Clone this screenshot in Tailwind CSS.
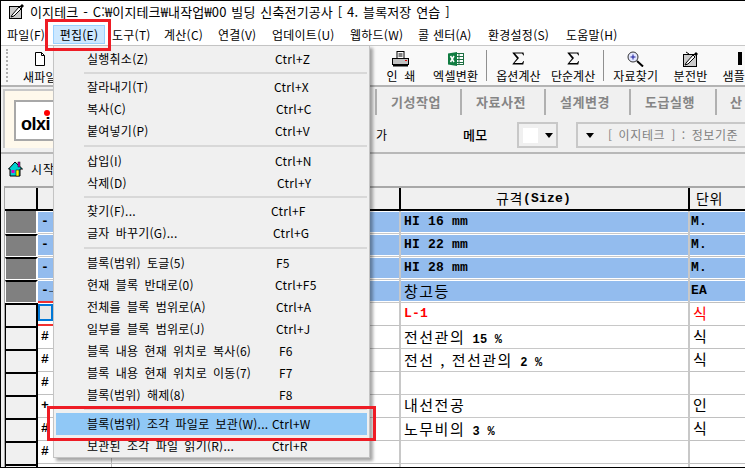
<!DOCTYPE html>
<html lang="ko">
<head>
<meta charset="UTF-8">
<title>이지테크</title>
<script src="https://cdn.jsdelivr.net/npm/@tailwindcss/browser@4"></script>
</head>
<body class="bg-white">
<div class="relative w-[745px] h-[468px] overflow-hidden border border-black border-r-0 bg-[#f0f0f0] text-[12px] tracking-[0.25px] text-black font-['Noto_Sans_CJK_KR','Liberation_Sans',sans-serif]">

  <!-- title bar -->
  <div class="h-[21px] bg-white flex items-center pl-[8px] gap-[5px]">
    <svg width="16" height="17" viewBox="0 0 16 17" class="shrink-0"><rect x=".5" y="3.500" width="12" height="12" fill="#ccc" stroke="#000"/><path d="M3 12l7-8 2 2-7 7-3 1z" fill="#fff" stroke="#000"/><path d="M11 3l2-2 2 2-2 2z" fill="#000"/></svg>
    <span class="text-[13px] leading-none tracking-[0.15px] [word-spacing:1px] whitespace-nowrap">이지테크 - C:₩이지테크₩내작업₩00 빌딩 신축전기공사 [ 4. 블록저장 연습 ]</span>
  </div>

  <!-- menu bar -->
  <div class="h-[24px] bg-white flex items-center pl-[6px] pt-[2px] border-b border-[#c8c8c8] whitespace-nowrap">
    <span class="w-[46px]">파일(F)</span>
    <span class="w-[52px] h-[19px] flex items-center justify-center bg-[#cce8ff] border border-[#99d1ff]">편집(E)</span>
    <span class="w-[59px] pl-[7px]">도구(T)</span>
    <span class="w-[54px]">계산(C)</span>
    <span class="w-[54px]">연결(V)</span>
    <span class="w-[78px]">업데이트(U)</span>
    <span class="w-[68px]">웹하드(W)</span>
    <span class="w-[70px]">콜 센터(A)</span>
    <span class="w-[78px]">환경설정(S)</span>
    <span>도움말(H)</span>
  </div>

  <!-- toolbar -->
  <div class="h-[41px] bg-[#f9f9f9] flex items-stretch pl-[5px] border-b-2 border-[#b4b4b4] whitespace-nowrap">
    <div class="w-[2px] my-[3px] border-l-2 border-dotted border-[#b0b0b0]"></div>
    <div class="w-[64px] flex flex-col items-center pt-[6px]">
      <svg width="12" height="14" viewBox="0 0 12 14"><path d="M1.500.5h6l3 3v10h-9z" fill="#fff" stroke="#000"/><path d="M7.500.5v3h3" fill="none" stroke="#000"/></svg>
      <span class="mt-[3px] leading-[16px]">새파일</span>
    </div>
    <div class="w-[306px]"></div>
    <div class="w-[50px] flex flex-col items-center pt-[5px]">
      <svg width="17" height="16" viewBox="0 0 17 16"><rect x="5" y=".5" width="7" height="7" fill="#fff" stroke="#000"/><path d="M6.500 3h4M6.500 5h4" stroke="#000"/><rect x=".5" y="7.500" width="16" height="6" fill="#c0c0c0" stroke="#000"/><rect x="13" y="9" width="2" height="1" fill="#d00"/><path d="M1 14.500h15" stroke="#000" stroke-width="2"/></svg>
      <span class="leading-[18px] [word-spacing:3px]">인 쇄</span>
    </div>
    <div class="w-[60px] flex flex-col items-center pt-[6px]">
      <svg width="16" height="14" viewBox="0 0 16 14"><rect x="6.500" y="1.500" width="9" height="11" fill="#fff" stroke="#1d6f42"/><path d="M7 4.500h8M7 7.500h8M7 10.500h8M11 2v10" stroke="#1d6f42"/><path d="M0 1.500L9 0v14L0 12.500z" fill="#107c41"/><path d="M2.500 4l3.500 6M6 4l-3.500 6" stroke="#fff" stroke-width="1.500"/></svg>
      <span class="mt-[1px] leading-[18px]">엑셀변환</span>
    </div>
    <div class="w-px my-[4px] bg-[#909090]"></div>
    <div class="w-[64px] flex flex-col items-center pt-[6px]">
      <svg width="13" height="13" viewBox="0 0 13 13"><path d="M.5.5h11l.5 3h-.5L10 1.500H3L7 6 2.500 11H10l1.500-2h.5l-.7 3.500H.5v-.5L5 6.500.5 1z" fill="#000"/></svg>
      <span class="mt-[2px] leading-[18px] tracking-[0px]">옵션계산</span>
    </div>
    <div class="w-[46px] flex flex-col items-center pt-[6px]">
      <svg width="13" height="13" viewBox="0 0 13 13"><path d="M.5.5h11l.5 3h-.5L10 1.500H3L7 6 2.500 11H10l1.500-2h.5l-.7 3.500H.5v-.5L5 6.500.5 1z" fill="#000"/></svg>
      <span class="mt-[2px] leading-[18px] tracking-[0px]">단순계산</span>
    </div>
    <div class="w-px ml-[7px] my-[4px] bg-[#909090]"></div>
    <div class="w-[64px] flex flex-col items-center pt-[5px]">
      <svg width="17" height="16" viewBox="0 0 17 16"><circle cx="6" cy="6" r="5" fill="#e4e8ff" stroke="#333"/><path d="M3.500 6h5M6 3.500v5" stroke="#1a1a9a"/><path d="M10 10l6 5.500" stroke="#000" stroke-width="2"/></svg>
      <span class="leading-[18px]">자료찾기</span>
    </div>
    <div class="w-[46px] flex flex-col items-center pt-[5px]">
      <svg width="16" height="16" viewBox="0 0 16 16"><rect x=".5" y="3.500" width="13" height="12" fill="#ccc" stroke="#000"/><path d="M3 12l7-8 2 2-7 7-3 1z" fill="#fff" stroke="#000"/><path d="M11 3l2-2 2 2-2 2z" fill="#000"/><path d="M3 1l3 2" stroke="#000"/></svg>
      <span class="leading-[18px]">분전반</span>
    </div>
    <div class="pl-[9px] flex flex-col">
      <div class="h-[21px] pt-[6px] pl-[16px]"><div class="w-[4px] h-[13px] bg-black"></div></div>
      <span class="leading-[18px]">샘플</span>
    </div>
  </div>

  <!-- logo and tabs -->
  <div class="h-[67px] pt-[2px] flex border-b-2 border-[#b8b8b8]">
    <div class="ml-[2px] w-[50px] h-[59px] bg-[#fff9ec] border-l-2 border-t-2 border-[#c8c8c8] pt-[9px] pl-[9px]">
      <div class="relative h-[41px] bg-white border-l-2 border-t-2 border-b-2 border-[#a8a8a8] flex items-center pl-[5px] pt-[6px]">
        <span class="font-['Liberation_Sans'] font-bold text-[18px] leading-none tracking-[-0.5px]">olxi</span>
        <span class="absolute right-[3px] top-[8px] w-[6px] h-[6px] rounded-full bg-[#f00]"></span>
      </div>
    </div>
    <div class="ml-[323px] flex-1 flex flex-col whitespace-nowrap">
      <div class="h-[26px] flex text-[13px] font-bold tracking-[0.5px] text-[#858585] leading-[26px] border-l-2 border-[#b0b0b0] ml-[-1px]">
        <span class="w-[85px] pl-[14px] border-r-2 border-[#b0b0b0]">기성작업</span>
        <span class="w-[84px] pl-[14px] border-r-2 border-[#b0b0b0]">자료사전</span>
        <span class="w-[85px] pl-[14px] border-r-2 border-[#b0b0b0]">설계변경</span>
        <span class="w-[86px] pl-[14px] border-r-2 border-[#b0b0b0]">도급실행</span>
        <span class="pl-[13px]">산</span>
      </div>
      <div class="h-[26px] mt-[7px] flex items-center">
        <span class="w-[87px]">가</span>
        <span class="w-[54px] font-medium text-[13px]">메모</span>
        <div class="w-[41px] h-[26px] border-2 border-[#c8c8c8] flex items-center pl-[4px] gap-[7px]">
          <span class="w-[15px] h-[15px] bg-white"></span>
          <span class="w-0 h-0 border-x-[4px] border-x-transparent border-t-[5px] border-t-black"></span>
        </div>
        <div class="ml-[18px] flex-1 h-[26px] border-2 border-[#c8c8c8] border-r-0 flex items-center pl-[8px] text-[#808080] overflow-hidden tracking-[0.6px] [word-spacing:2px]">
          <span class="w-0 h-0 border-x-[4px] border-x-transparent border-t-[5px] border-t-black mr-[14px] shrink-0"></span>
          [ 이지테크 ] : 정보기준
        </div>
      </div>
    </div>
  </div>

  <!-- start row -->
  <div class="h-[32px] flex items-center pl-[7px] pb-[3px] gap-[8px]">
    <svg width="15" height="16" viewBox="0 0 15 16"><path d="M7 1L.5 8H2v7h10V8h2.500z" fill="#00d0d0" stroke="#000"/><rect x="10" y="1" width="2" height="5" fill="#e000c0" stroke="#000" stroke-width=".5"/><rect x="3.500" y="9" width="3" height="3" fill="#e000c0"/><rect x="8" y="9" width="3" height="6" fill="#ff0" stroke="#000" stroke-width=".5"/></svg>
    <span class="tracking-[1px]">시작</span>
  </div>

  <!-- grid -->
  <div class="ml-[3px] border-l border-t-2 border-[#a8a8a8] bg-white font-['Liberation_Mono'] font-bold text-[13px] tracking-[0.2px]">
    <div class="h-[23px] flex bg-[#f0f0f0] border-b-2 border-black">
      <div class="w-[33px] border-r-2 border-black"></div>
      <div class="w-[363px] border-r-2 border-black"></div>
      <div class="w-[289px] border-r-2 border-black flex items-center justify-center pr-[22px]"><span class="font-['Noto_Sans_CJK_KR'] font-normal text-[14px] tracking-[0.5px]">규격</span>(Size)</div>
      <div class="flex-1 flex items-center pl-[6px] font-normal font-['Noto_Sans_CJK_KR'] text-[14px] tracking-[0.5px]">단위</div>
    </div>

    <div class="h-[23px] flex">
      <div class="w-[33px] bg-[#808080] border-l border-l-white border-r-2 border-r-white border-b border-b-white"></div>
      <div class="w-[363px] border-r-2 border-[#c8c8c8] border-b border-[#c0c0c0] pt-[1px]"><div class="h-[20px] bg-[#93bcee] pl-[3px] leading-[19px]">-</div></div>
      <div class="w-[289px] border-r-2 border-[#c8c8c8] border-b border-[#c0c0c0] pt-[1px]"><div class="h-[20px] bg-[#93bcee] pl-[3px] leading-[19px] whitespace-pre">HI 16 mm</div></div>
      <div class="flex-1 border-b border-[#c0c0c0] pt-[1px]"><div class="h-[20px] bg-[#93bcee] pl-[1px] leading-[19px]">M.</div></div>
    </div>
    <div class="h-[23px] flex">
      <div class="w-[33px] bg-[#808080] border-t-2 border-t-black border-l border-l-white border-r-2 border-r-white border-b border-b-white"></div>
      <div class="w-[363px] border-r-2 border-[#c8c8c8] border-b border-[#c0c0c0] pt-[1px]"><div class="h-[20px] bg-[#93bcee] pl-[3px] leading-[19px]">-</div></div>
      <div class="w-[289px] border-r-2 border-[#c8c8c8] border-b border-[#c0c0c0] pt-[1px]"><div class="h-[20px] bg-[#93bcee] pl-[3px] leading-[19px] whitespace-pre">HI 22 mm</div></div>
      <div class="flex-1 border-b border-[#c0c0c0] pt-[1px]"><div class="h-[20px] bg-[#93bcee] pl-[1px] leading-[19px]">M.</div></div>
    </div>
    <div class="h-[23px] flex">
      <div class="w-[33px] bg-[#808080] border-t-2 border-t-black border-l border-l-white border-r-2 border-r-white border-b border-b-white"></div>
      <div class="w-[363px] border-r-2 border-[#c8c8c8] border-b border-[#c0c0c0] pt-[1px]"><div class="h-[20px] bg-[#93bcee] pl-[3px] leading-[19px]">-</div></div>
      <div class="w-[289px] border-r-2 border-[#c8c8c8] border-b border-[#c0c0c0] pt-[1px]"><div class="h-[20px] bg-[#93bcee] pl-[3px] leading-[19px] whitespace-pre">HI 28 mm</div></div>
      <div class="flex-1 border-b border-[#c0c0c0] pt-[1px]"><div class="h-[20px] bg-[#93bcee] pl-[1px] leading-[19px]">M.</div></div>
    </div>
    <div class="h-[23px] flex">
      <div class="w-[33px] bg-[#808080] border-t-2 border-t-black border-l border-l-white border-r-2 border-r-white border-b border-b-white"></div>
      <div class="w-[363px] border-r-2 border-[#c8c8c8] border-b border-[#c0c0c0] pt-[1px]"><div class="h-[20px] bg-[#93bcee] pl-[3px] leading-[19px]">-→</div></div>
      <div class="w-[289px] border-r-2 border-[#c8c8c8] border-b border-[#c0c0c0] pt-[1px]"><div class="h-[20px] bg-[#93bcee] pl-[3px] leading-[20px] font-normal font-['Noto_Sans_CJK_KR'] text-[15px] tracking-[1.5px]">창고등</div></div>
      <div class="flex-1 border-b border-[#c0c0c0] pt-[1px]"><div class="h-[20px] bg-[#93bcee] pl-[1px] leading-[19px]">EA</div></div>
    </div>

    <!-- current row -->
    <div class="h-[23px] flex">
      <div class="w-[33px] bg-[#f0f0f0] border-t-2 border-t-black border-l border-l-black border-r-2 border-r-black"></div>
      <div class="w-[74px] h-[25px] -mt-[2px] border-t-2 border-t-[#f03030] border-b-2 border-b-[#f03030] border-r border-r-[#c0c0c0] pt-[1px]"><div class="w-[15px] h-[17px] border-2 border-[#0078d7] bg-[#e8e8e8]"></div></div>
      <div class="w-[289px] border-r-2 border-[#c8c8c8] border-b border-b-[#c0c0c0]"></div>
      <div class="w-[289px] border-r-2 border-[#c8c8c8] border-b border-[#c0c0c0] pl-[3px] leading-[22px] text-[#f00]">L-1</div>
      <div class="flex-1 border-b border-[#c0c0c0] pl-[3px] leading-[20px] font-normal font-['Noto_Sans_CJK_KR'] text-[15px] text-[#f00]">식</div>
    </div>
    <div class="h-[23px] flex">
      <div class="w-[33px] bg-[#f0f0f0] border-t-2 border-t-black border-l border-l-black border-r-2 border-r-black"></div>
      <div class="w-[74px] border-r border-b border-[#c0c0c0] pl-[3px] leading-[22px]">#</div>
      <div class="w-[289px] border-r-2 border-[#c8c8c8] border-b border-b-[#c0c0c0]"></div>
      <div class="w-[289px] border-r-2 border-[#c8c8c8] border-b border-[#c0c0c0] pl-[3px] leading-[21px] text-[12px] whitespace-pre"><span class="font-normal font-['Noto_Sans_CJK_KR'] text-[15px] tracking-[1.5px]">전선관의</span> 15 %</div>
      <div class="flex-1 border-b border-[#c0c0c0] pl-[3px] leading-[20px] font-normal font-['Noto_Sans_CJK_KR'] text-[15px]">식</div>
    </div>
    <div class="h-[23px] flex">
      <div class="w-[33px] bg-[#f0f0f0] border-t-2 border-t-black border-l border-l-black border-r-2 border-r-black"></div>
      <div class="w-[74px] border-r border-b border-[#c0c0c0] pl-[3px] leading-[22px]">#</div>
      <div class="w-[289px] border-r-2 border-[#c8c8c8] border-b border-b-[#c0c0c0]"></div>
      <div class="w-[289px] border-r-2 border-[#c8c8c8] border-b border-[#c0c0c0] pl-[3px] leading-[21px] text-[12px] whitespace-pre"><span class="font-normal font-['Noto_Sans_CJK_KR'] text-[15px] tracking-[1.5px]">전선 , 전선관의</span> 2 %</div>
      <div class="flex-1 border-b border-[#c0c0c0] pl-[3px] leading-[20px] font-normal font-['Noto_Sans_CJK_KR'] text-[15px]">식</div>
    </div>
    <div class="h-[23px] flex">
      <div class="w-[33px] bg-[#f0f0f0] border-t-2 border-t-black border-l border-l-black border-r-2 border-r-black"></div>
      <div class="w-[74px] border-r border-b border-[#c0c0c0] pl-[3px] leading-[22px]">#</div>
      <div class="w-[289px] border-r-2 border-[#c8c8c8] border-b border-b-[#c0c0c0]"></div>
      <div class="w-[289px] border-r-2 border-[#c8c8c8] border-b border-[#c0c0c0]"></div>
      <div class="flex-1 border-b border-[#c0c0c0]"></div>
    </div>
    <div class="h-[23px] flex">
      <div class="w-[33px] bg-[#f0f0f0] border-t-2 border-t-black border-l border-l-black border-r-2 border-r-black"></div>
      <div class="w-[74px] border-r border-b border-[#c0c0c0] pl-[3px] leading-[22px]">+</div>
      <div class="w-[289px] border-r-2 border-[#c8c8c8] border-b border-b-[#c0c0c0]"></div>
      <div class="w-[289px] border-r-2 border-[#c8c8c8] border-b border-[#c0c0c0] pl-[3px] leading-[20px] font-normal font-['Noto_Sans_CJK_KR'] text-[15px] tracking-[1.5px]">내선전공</div>
      <div class="flex-1 border-b border-[#c0c0c0] pl-[3px] leading-[20px] font-normal font-['Noto_Sans_CJK_KR'] text-[15px]">인</div>
    </div>
    <div class="h-[23px] flex">
      <div class="w-[33px] bg-[#f0f0f0] border-t-2 border-t-black border-l border-l-black border-r-2 border-r-black"></div>
      <div class="w-[74px] border-r border-b border-[#c0c0c0] pl-[3px] leading-[22px]">#</div>
      <div class="w-[289px] border-r-2 border-[#c8c8c8] border-b border-b-[#c0c0c0]"></div>
      <div class="w-[289px] border-r-2 border-[#c8c8c8] border-b border-[#c0c0c0] pl-[3px] leading-[21px] text-[12px] whitespace-pre"><span class="font-normal font-['Noto_Sans_CJK_KR'] text-[15px] tracking-[1.5px]">노무비의</span> 3 %</div>
      <div class="flex-1 border-b border-[#c0c0c0] pl-[3px] leading-[20px] font-normal font-['Noto_Sans_CJK_KR'] text-[15px]">식</div>
    </div>
    <div class="h-[23px] flex">
      <div class="w-[33px] bg-[#f0f0f0] border-t-2 border-t-black border-l border-l-black border-r-2 border-r-black"></div>
      <div class="w-[74px] border-r border-b border-[#c0c0c0] pl-[3px] leading-[22px]">#</div>
      <div class="w-[289px] border-r-2 border-[#c8c8c8] border-b border-b-[#c0c0c0]"></div>
      <div class="w-[289px] border-r-2 border-[#c8c8c8] border-b border-[#c0c0c0]"></div>
      <div class="flex-1 border-b border-[#c0c0c0]"></div>
    </div>
    <div class="h-[23px] flex">
      <div class="w-[33px] bg-[#f0f0f0] border-t-2 border-t-black border-l border-l-black border-r-2 border-r-black"></div>
      <div class="w-[74px] border-r border-[#c0c0c0]"></div>
      <div class="w-[289px] border-r-2 border-[#c8c8c8]"></div>
      <div class="w-[289px] border-r-2 border-[#c8c8c8]"></div>
      <div class="flex-1"></div>
    </div>
  </div>

  <!-- edit menu popup -->
  <div class="absolute left-[52px] top-[44px] w-[317px] h-[413px] pt-[2px] bg-[#f0f0f0] border border-[#c4c4c4] shadow-[3px_3px_3px_rgba(0,0,0,0.35)] [word-spacing:2.5px] whitespace-nowrap">
    <div class="h-[22px] flex items-center"><span class="w-[221px] pl-[33px]">실행취소(Z)</span><span>Ctrl+Z</span></div>
    <div class="h-[6px] ml-[30px] mr-[2px] flex items-center"><div class="w-full h-[2px] bg-[#d8d8d8]"></div></div>
    <div class="h-[22px] flex items-center"><span class="w-[220px] pl-[33px]">잘라내기(T)</span><span>Ctrl+X</span></div>
    <div class="h-[22px] flex items-center"><span class="w-[222px] pl-[33px]">복사(C)</span><span>Ctrl+C</span></div>
    <div class="h-[22px] flex items-center"><span class="w-[221px] pl-[33px]">붙여넣기(P)</span><span>Ctrl+V</span></div>
    <div class="h-[8px] ml-[30px] mr-[2px] flex items-center"><div class="w-full h-[2px] bg-[#d8d8d8]"></div></div>
    <div class="h-[22px] flex items-center"><span class="w-[221px] pl-[33px]">삽입(I)</span><span>Ctrl+N</span></div>
    <div class="h-[22px] flex items-center"><span class="w-[223px] pl-[33px]">삭제(D)</span><span>Ctrl+Y</span></div>
    <div class="h-[6px] ml-[30px] mr-[2px] flex items-center"><div class="w-full h-[2px] bg-[#d8d8d8]"></div></div>
    <div class="h-[22px] flex items-center"><span class="w-[217px] pl-[33px]">찾기(F)...</span><span>Ctrl+F</span></div>
    <div class="h-[22px] flex items-center"><span class="w-[219px] pl-[33px]">글자 바꾸기(G)...</span><span>Ctrl+G</span></div>
    <div class="h-[8px] ml-[30px] mr-[2px] flex items-center"><div class="w-full h-[2px] bg-[#d8d8d8]"></div></div>
    <div class="h-[22px] flex items-center"><span class="w-[222px] pl-[33px]">블록(범위) 토글(5)</span><span>F5</span></div>
    <div class="h-[22px] flex items-center"><span class="w-[221px] pl-[33px]">현재 블록 반대로(0)</span><span>Ctrl+F5</span></div>
    <div class="h-[22px] flex items-center"><span class="w-[222px] pl-[33px]">전체를 블록 범위로(A)</span><span>Ctrl+A</span></div>
    <div class="h-[22px] flex items-center"><span class="w-[222px] pl-[33px]">일부를 블록 범위로(J)</span><span>Ctrl+J</span></div>
    <div class="h-[22px] flex items-center"><span class="w-[225px] pl-[33px]">블록 내용 현재 위치로 복사(6)</span><span>F6</span></div>
    <div class="h-[22px] flex items-center"><span class="w-[225px] pl-[33px]">블록 내용 현재 위치로 이동(7)</span><span>F7</span></div>
    <div class="h-[22px] flex items-center"><span class="w-[225px] pl-[33px]">블록(범위) 해제(8)</span><span>F8</span></div>
    <div class="h-[7px] ml-[30px] mr-[2px] flex items-start pt-[2px]"><div class="w-full h-[2px] bg-[#d8d8d8]"></div></div>
    <div class="h-[22px] mx-[2px] flex items-center bg-[#90c8f6]"><span class="w-[216px] pl-[31px]">블록(범위) 조각 파일로 보관(W)...</span><span>Ctrl+W</span></div>
    <div class="h-[22px] flex items-center"><span class="w-[218px] pl-[33px]">보관된 조각 파일 읽기(R)...</span><span>Ctrl+R</span></div>
  </div>

  <!-- red callouts -->
  <div class="absolute left-[44px] top-[18px] w-[66px] h-[32px] border-[3px] border-[#ee1c25]"></div>
  <div class="absolute left-[46px] top-[405px] w-[329px] h-[35px] border-[3px] border-[#ee1c25]"></div>
</div>
</body>
</html>
